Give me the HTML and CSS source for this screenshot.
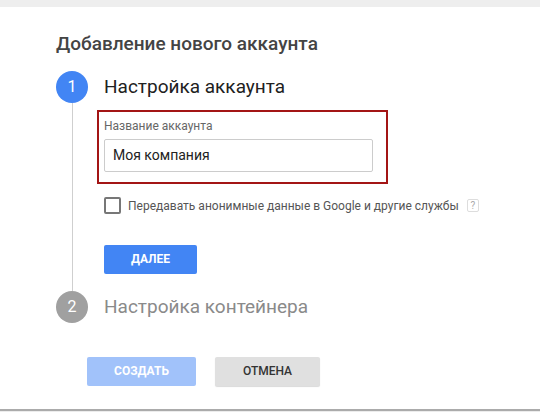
FILE: index.html
```html
<!DOCTYPE html>
<html lang="ru">
<head>
	<meta charset="UTF-8">
	<title>Добавление нового аккаунта</title>
	<link rel="stylesheet" href="styles.css">
</head>
<body>
	<div class="topbar"></div>
	<div class="dialog">
		<h1 class="dialog-title">Добавление нового аккаунта</h1>
		<div class="step step-active">
			<div class="step-rail">
				<span class="step-num">1</span>
				<span class="step-line"></span>
			</div>
			<div class="step-body">
				<div class="step-name">Настройка аккаунта</div>
				<div class="field-box">
					<label class="field-label">Название аккаунта</label>
					<div class="field-input">Моя компания</div>
				</div>
				<div class="check-row">
					<span class="checkbox"></span>
					<span class="check-text">Передавать анонимные данные в Google и другие службы</span>
					<span class="help">?</span>
				</div>
				<a href="javascript:;" class="btn btn-blue">ДАЛЕЕ</a>
			</div>
		</div>
		<div class="step step-off">
			<div class="step-rail">
				<span class="step-num">2</span>
			</div>
			<div class="step-body">
				<div class="step-name">Настройка контейнера</div>
			</div>
		</div>
		<div class="actions">
			<a href="javascript:;" class="btn btn-light">СОЗДАТЬ</a>
			<a href="javascript:;" class="btn btn-grey">ОТМЕНА</a>
		</div>
	</div>
	<div class="bottomline"></div>
</body>
</html>
```

FILE: styles.css
```css
*{
	margin: 0;
	padding: 0;
	box-sizing: border-box;
	text-decoration: none;
}
body{
	font-family: Roboto, "Noto Sans", Arial, sans-serif;
	background: #fff;
	width: 540px;
	height: 412px;
	overflow: hidden;
}
.topbar{
	height: 7px;
	background: #eeeeee;
}
.dialog{
	height: 402px;
	padding: 24px 0 0 56px;
}
.dialog-title{
	font-size: 19px;
	font-weight: 500;
	color: #444;
	line-height: 26px;
	margin-bottom: 14px;
}
.step{
	display: flex;
	gap: 16px;
}
.step-rail{
	width: 32px;
	display: flex;
	flex-direction: column;
	align-items: center;
}
.step-num{
	width: 32px;
	height: 32px;
	border-radius: 50%;
	background: #4285f4;
	color: #fff;
	font-size: 16px;
	line-height: 32px;
	text-align: center;
}
.step-line{
	flex: 1;
	width: 1px;
	background: #cfcfcf;
}
.step-off .step-num{ background: #a0a0a0;}
.step-body{
	flex: 1;
}
.step-name{
	font-size: 19px;
	color: #212121;
	line-height: 32px;
}
.step-off .step-name{ color: #8a8a8a;}
.field-box{
	width: 291px;
	margin: 7px 0 0 -7px;
	border: 2px solid #a31515;
	padding: 6px 13px 10px 5px;
}
.field-label{
	display: block;
	font-size: 12px;
	color: #666;
	line-height: 16px;
	margin-bottom: 5px;
}
.field-input{
	height: 33px;
	border: 1px solid #ccc;
	border-radius: 2px;
	padding-left: 8px;
	font-size: 14px;
	line-height: 31px;
	color: #222;
}
.check-row{
	display: flex;
	align-items: center;
	margin-top: 13px;
	height: 17px;
}
.checkbox{
	width: 17px;
	height: 17px;
	border: 2px solid #777;
	border-radius: 2px;
	margin-right: 7px;
}
.check-text{
	font-size: 12px;
	color: #555;
}
.help{
	width: 12px;
	height: 13px;
	margin-left: 8px;
	border: 1px solid #ddd;
	border-radius: 2px;
	font-size: 10px;
	line-height: 11px;
	text-align: center;
	color: #aaa;
}
.btn{
	display: inline-block;
	height: 29px;
	line-height: 29px;
	text-align: center;
	border-radius: 2px;
	font-size: 12px;
	font-weight: 700;
}
.step-active .btn-blue{
	width: 93px;
	margin: 31px 0 17px;
}
.btn-blue{ background: #4285f4; color: #fff;}
.btn-light{ width: 109px; background: #a1c2fa; color: #fff;}
.btn-grey{
	width: 105px;
	background: #e0e0e0;
	color: #333;
	font-weight: 500;
	box-shadow: 0 1px 1px rgba(0,0,0,.15);
}
.actions{
	display: flex;
	gap: 19px;
	margin: 34px 0 0 31px;
}
.bottomline{
	height: 3px;
	border-top: 2px solid #ababab;
	background: #ececec;
}
```
